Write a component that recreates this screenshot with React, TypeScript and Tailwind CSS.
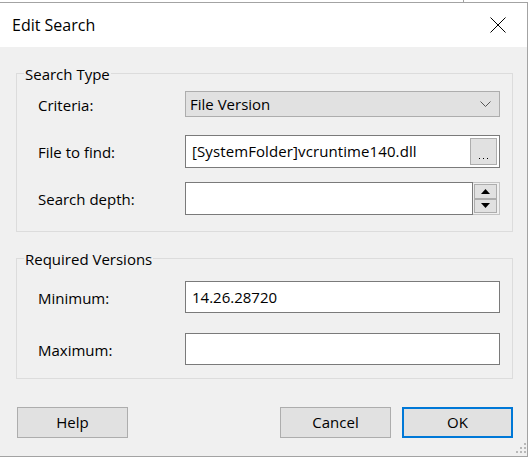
import React from "react";

const font = "font-['Open_Sans',sans-serif]";

function Label({ children }: { children: React.ReactNode }) {
  return <div className="text-[15px] text-black leading-none pt-[2px]">{children}</div>;
}

export default function App() {
  return (
    <div className={`relative w-[529px] h-[457px] bg-white overflow-hidden ${font}`}>
      <div className="absolute left-[463px] top-0 w-px h-[2px] bg-[#a0a0a0]" />
      <div className="mt-[2px] w-[528px] h-[455px] border-t border-r border-b border-[#a3a3a3] flex flex-col">
        {/* Title bar */}
        <div className="h-[44px] bg-white flex items-center justify-between pl-[12px] pr-[14px]">
          <div className="text-[16px] text-black leading-none">Edit Search</div>
          <svg width="16" height="16" viewBox="0 0 16 16" className="mr-[7px]">
            <path d="M0.5 0.5 L15.5 15.5 M15.5 0.5 L0.5 15.5" stroke="#000" strokeWidth="1" fill="none" />
          </svg>
        </div>
        {/* Body */}
        <div className="relative flex-1 bg-[#f0f0f0] pt-[26px] pl-[16px]">
          {/* Group 1 */}
          <div className="relative w-[497px] h-[159px] border border-[#dcdcdc] pt-[17px] pl-[21px] pr-[12px]">
            <span className="absolute left-[7px] top-[-10px] bg-[#f0f0f0] px-[1px] text-[15px] leading-[20px] text-black">
              Search Type
            </span>
            <div className="grid grid-cols-[147px_315px] items-center">
              <Label>Criteria:</Label>
              <div className="h-[26px] bg-[#e1e1e1] border border-[#adadad] flex items-center justify-between pl-[4px] pr-[8px] text-[15px] text-black">
                <span>File Version</span>
                <svg width="11" height="7" viewBox="0 0 11 7">
                  <path d="M0.5 0.5 L5.5 5.5 L10.5 0.5" stroke="#555" strokeWidth="1" fill="none" />
                </svg>
              </div>
              <div className="h-[18px]" />
              <div className="h-[18px]" />
              <Label>File to find:</Label>
              <div className="h-[33px] bg-white border border-[#7a7a7a] flex items-center justify-between pl-[6px] pr-[2px] text-[15px] text-black">
                <span className="tracking-[0.1px]">[SystemFolder]vcruntime140.dll</span>
                <div className="w-[27px] h-[27px] bg-[#e1e1e1] border border-[#adadad] flex items-end justify-center pb-[5px]">
                  <div className="flex gap-[3px]">
                    <div className="w-px h-px bg-black" />
                    <div className="w-px h-px bg-black" />
                    <div className="w-px h-px bg-black" />
                  </div>
                </div>
              </div>
              <div className="h-[14px]" />
              <div className="h-[14px]" />
              <Label>Search depth:</Label>
              <div className="h-[33px] flex">
                <div className="flex-1 bg-white border border-[#7a7a7a]" />
                <div className="w-[27px] border border-[#c4c4c4] border-l-0 bg-[#f0f0f0] flex flex-col justify-between py-px pl-px pr-[2px]">
                  <div className="h-[15px] bg-[#e1e1e1] border border-[#adadad] flex items-center justify-center">
                    <svg width="9" height="5" viewBox="0 0 9 5"><path d="M4.5 0 L9 5 L0 5 Z" fill="#000" /></svg>
                  </div>
                  <div className="h-[15px] bg-[#e1e1e1] border border-[#adadad] flex items-center justify-center">
                    <svg width="9" height="5" viewBox="0 0 9 5"><path d="M0 0 L9 0 L4.5 5 Z" fill="#000" /></svg>
                  </div>
                </div>
              </div>
            </div>
          </div>
          {/* Group 2 */}
          <div className="relative mt-[26px] w-[497px] h-[121px] border border-[#dcdcdc] pt-[22px] pl-[21px] pr-[12px]">
            <span className="absolute left-[7px] top-[-10px] bg-[#f0f0f0] px-[1px] text-[15px] leading-[20px] text-black">
              Required Versions
            </span>
            <div className="grid grid-cols-[147px_315px] items-center">
              <Label>Minimum:</Label>
              <div className="h-[32px] bg-white border border-[#7a7a7a] flex items-center pl-[6px] text-[15px] text-black">
                14.26.28720
              </div>
              <div className="h-[20px]" />
              <div className="h-[20px]" />
              <Label>Maximum:</Label>
              <div className="h-[32px] bg-white border border-[#7a7a7a]" />
            </div>
          </div>
          {/* Buttons */}
          <div className="mt-[28px] flex items-center justify-between pl-px pr-[14px]">
            <div className="w-[111px] h-[31px] bg-[#e1e1e1] border border-[#adadad] flex items-center justify-center text-[15px] text-black">
              Help
            </div>
            <div className="flex gap-[11px]">
              <div className="w-[111px] h-[31px] bg-[#e1e1e1] border border-[#adadad] flex items-center justify-center text-[15px] text-black">
                Cancel
              </div>
              <div className="w-[111px] h-[31px] bg-[#e1e1e1] border-2 border-[#0078d7] flex items-center justify-center text-[15px] text-black">
                OK
              </div>
            </div>
          </div>
          {/* Size grip */}
          <div className="absolute right-[1px] bottom-[1px] w-[12px] h-[12px]">
            <div className="absolute right-0 top-0 w-[2px] h-[2px] bg-[#b8b8b8]" />
            <div className="absolute right-0 top-[4px] w-[2px] h-[2px] bg-[#b8b8b8]" />
            <div className="absolute right-[4px] top-[4px] w-[2px] h-[2px] bg-[#b8b8b8]" />
            <div className="absolute right-0 top-[8px] w-[2px] h-[2px] bg-[#b8b8b8]" />
            <div className="absolute right-[4px] top-[8px] w-[2px] h-[2px] bg-[#b8b8b8]" />
            <div className="absolute right-[8px] top-[8px] w-[2px] h-[2px] bg-[#b8b8b8]" />
          </div>
        </div>
      </div>
    </div>
  );
}
